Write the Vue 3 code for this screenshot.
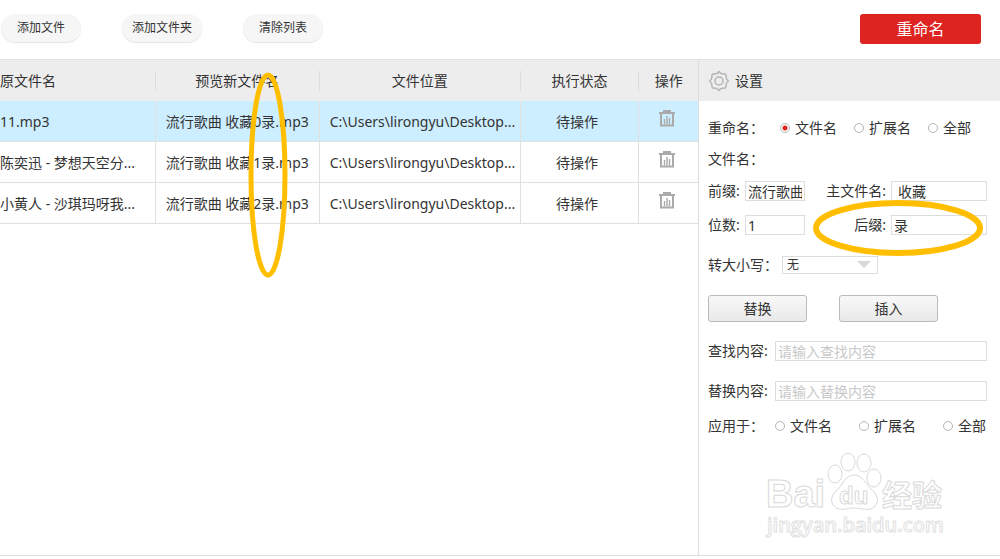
<template>
	<div class="app">
		<header class="toolbar">
			<div class="actions">
				<button v-for="action in actions" :key="action" class="pill" type="button">
					{{ action }}
				</button>
			</div>

			<button class="rename" type="button">重命名</button>
		</header>

		<main class="content">
			<section class="files">
				<table>
					<colgroup>
						<col class="col-source" />
						<col class="col-preview" />
						<col class="col-path" />
						<col class="col-status" />
						<col class="col-action" />
					</colgroup>

					<thead>
						<tr>
							<th v-for="column in columns" :key="column" scope="col">
								<span>{{ column }}</span>
							</th>
						</tr>
					</thead>

					<tbody>
						<tr
							v-for="(file, index) in files"
							:key="file.source"
							:class="{ selected: index === selected }"
							@click="selected = index"
						>
							<td class="source">{{ file.source }}</td>
							<td>{{ getPreview(index) }}</td>
							<td class="path">{{ file.path }}</td>
							<td class="status">待操作</td>
							<td class="action">
								<button class="remove" type="button" aria-label="删除">
									<svg width="16" height="17" viewBox="0 0 16 17" fill="none">
										<path d="M4 1H12M0 3H16M2 3V15.5H14V3" stroke="currentColor" stroke-width="2" />
										<path d="M5.5 9V14.5M8 6V14.5M10.5 8V14.5" stroke="currentColor" stroke-width="1.4" />
									</svg>
								</button>
							</td>
						</tr>
					</tbody>
				</table>

				<svg class="mark mark-preview" width="42" height="208" viewBox="0 0 42 208" fill="none">
					<ellipse cx="21" cy="104" rx="17" ry="100" stroke="#ffbf00" stroke-width="5" />
				</svg>
			</section>

			<aside class="settings">
				<h2>
					<svg width="22" height="22" viewBox="0 0 22 22" fill="none" stroke="#b5b5b5">
						<path
							d="M11 1.5Q12.6 3.7 14 3.8Q16.6 3.6 17.7 4.3Q18.4 5.4 18.2 8Q18.3 9.4 20.5 11Q18.3 12.6 18.2 14Q18.4 16.6 17.7 17.7Q16.6 18.4 14 18.2Q12.6 18.3 11 20.5Q9.4 18.3 8 18.2Q5.4 18.4 4.3 17.7Q3.6 16.6 3.8 14Q3.7 12.6 1.5 11Q3.7 9.4 3.8 8Q3.6 5.4 4.3 4.3Q5.4 3.6 8 3.8Q9.4 3.7 11 1.5Z"
							stroke-width="1.5"
							stroke-linejoin="round"
						/>
						<circle cx="11" cy="11" r="4" stroke-width="1.5" />
					</svg>
					设置
				</h2>

				<form class="form" @submit.prevent>
					<div class="row row-target" role="radiogroup" aria-label="重命名">
						<span class="caption">重命名：</span>
						<label v-for="target in targets" :key="target" class="radio">
							<input v-model="renameTarget" type="radio" name="rename" :value="target" />
							{{ target }}
						</label>
					</div>

					<div class="row row-heading">文件名：</div>

					<div class="fields">
						<label for="prefix">前缀:</label>
						<input id="prefix" v-model="prefix" type="text" />
						<label for="main" class="end">主文件名:</label>
						<input id="main" v-model="mainName" class="indented" type="text" />

						<label for="digits">位数:</label>
						<input id="digits" v-model="digits" type="text" />
						<label for="suffix" class="end">后缀:</label>
						<input id="suffix" v-model="suffix" type="text" />

						<svg class="mark mark-suffix" width="172" height="58" viewBox="0 0 172 58" fill="none">
							<ellipse cx="86" cy="29" rx="82" ry="25" stroke="#ffbf00" stroke-width="6" />
						</svg>
					</div>

					<div class="row row-case">
						<label for="letter-case">转大小写：</label>
						<div class="select">
							<select id="letter-case">
								<option>无</option>
							</select>
						</div>
					</div>

					<div class="modes">
						<button type="button">替换</button>
						<button type="button">插入</button>
					</div>

					<div class="row row-text">
						<label for="find">查找内容:</label>
						<input id="find" type="text" placeholder="请输入查找内容" />
					</div>

					<div class="row row-text">
						<label for="replace">替换内容:</label>
						<input id="replace" type="text" placeholder="请输入替换内容" />
					</div>

					<div class="row row-apply" role="radiogroup" aria-label="应用于">
						<span class="caption">应用于：</span>
						<label v-for="target in targets" :key="target" class="radio">
							<input v-model="applyTarget" type="radio" name="apply" :value="target" />
							{{ target }}
						</label>
					</div>
				</form>

				<svg class="watermark" width="190" height="96" viewBox="0 0 190 96">
					<g class="outline">
						<text x="6" y="62" font-size="38">Bai</text>
						<ellipse cx="75" cy="29" rx="7" ry="9" />
						<ellipse cx="88" cy="17" rx="7" ry="9" />
						<ellipse cx="104" cy="18" rx="7" ry="9" />
						<ellipse cx="114" cy="33" rx="7" ry="9" />
						<path
							d="M94 30C85 30 83 40 77 45C71 50 70 57 74 61C79 67 87 63 94 63C101 63 110 67 115 61C119 57 118 50 112 45C106 40 103 30 94 30Z"
						/>
						<text x="79" y="59" font-size="24">du</text>
						<text x="122" y="61" font-size="30">经验</text>
						<text x="7" y="87" class="url" font-size="20">jingyan.baidu.com</text>
					</g>
				</svg>
			</aside>
		</main>
	</div>
</template>

<script setup>
import { ref } from 'vue'

const actions = ['添加文件', '添加文件夹', '清除列表']
const columns = ['原文件名', '预览新文件名', '文件位置', '执行状态', '操作']
const targets = ['文件名', '扩展名', '全部']

const files = [
	{ source: '11.mp3', path: 'C:\\Users\\lirongyu\\Desktop...' },
	{ source: '陈奕迅 - 梦想天空分...', path: 'C:\\Users\\lirongyu\\Desktop...' },
	{ source: '小黄人 - 沙琪玛呀我...', path: 'C:\\Users\\lirongyu\\Desktop...' }
]

const selected = ref(0)
const renameTarget = ref('文件名')
const applyTarget = ref('')
const prefix = ref('流行歌曲')
const mainName = ref('收藏')
const digits = ref('1')
const suffix = ref('录')

/**
 * Build the new file name from the settings
 * @param {number} index Position of the file in the list
 * @returns {string} New file name
 */
const getPreview = (index) => {
	return `${prefix.value} ${mainName.value}${index}${suffix.value}.mp3`
}
</script>

<style>
body {
	margin: 0;
	background: #fff;
}
</style>

<style scoped>
.app {
	min-height: 100vh;
	box-sizing: border-box;
	padding-bottom: 3px;
	display: flex;
	flex-direction: column;
	overflow: hidden;
	color: #333;
	font-family: 'Noto Sans', 'Noto Sans CJK SC', sans-serif;
	font-size: 14px;
	line-height: 20px;
}

button,
input,
select {
	box-sizing: border-box;
	margin: 0;
	color: inherit;
	font: inherit;
}

.toolbar {
	display: flex;
	justify-content: space-between;
	align-items: flex-start;
	padding: 14px 19px 15px 1px;
	border-bottom: 1px solid #e0e0e0;
}

.actions {
	display: flex;
	gap: 41px;
}

.pill {
	width: 80px;
	height: 28px;
	padding: 0;
	border: 0;
	border-radius: 14px;
	background: #f6f6f6;
	box-shadow: 0 1px 1px #e4e4e4;
	font-size: 12px;
}

.rename {
	width: 121px;
	height: 30px;
	padding: 0;
	border: 0;
	border-radius: 3px;
	background: #de2420;
	color: #fff;
	font-size: 16px;
}

.content {
	flex: 1;
	display: flex;
	border-bottom: 1px solid #ddd;
}

.files {
	flex: 1;
	min-width: 0;
	position: relative;
}

table {
	width: 100%;
	table-layout: fixed;
	border-collapse: separate;
	border-spacing: 0;
	white-space: nowrap;
}

.col-source {
	width: 22.3%;
}

.col-preview {
	width: 23.5%;
}

.col-path {
	width: 28.8%;
}

.col-status {
	width: 17%;
}

.col-action {
	width: 8.4%;
}

th {
	padding: 11px 0 10px;
	background: #ededed;
	font-weight: 400;

	span {
		display: block;
		border-right: 1px solid #dcdcdc;
	}

	&:first-child {
		text-align: left;
	}

	&:last-child span {
		border: 0;
	}
}

td {
	height: 38px;
	padding: 2px 0 0 10px;
	border-right: 1px solid #e0e0e0;
	border-bottom: 1px solid #e0e0e0;

	&.source {
		padding-left: 0;
	}

	&.status {
		padding: 2px 5px 0 0;
		text-align: center;
	}

	&.action {
		padding: 0 3px 0 0;
		height: 40px;
		border-right: 0;
		text-align: center;
	}
}

.selected td {
	background: #cdeeff;
}

.remove {
	padding: 0;
	border: 0;
	background: none;
	color: #aaa;

	svg {
		display: block;
	}
}

.mark {
	position: absolute;
	pointer-events: none;
}

.mark-preview {
	top: 11px;
	left: 247px;
}

.settings {
	width: 301px;
	position: relative;
	border-left: 1px solid #ddd;

	h2 {
		display: flex;
		align-items: center;
		gap: 5px;
		height: 41px;
		margin: 0;
		padding-left: 9px;
		background: #ededed;
		font-size: 14px;
		font-weight: 400;
	}
}

.form {
	padding: 17px 13px 0 9px;

	input[type='text'] {
		min-width: 0;
		height: 20px;
		padding: 0 2px;
		border: 1px solid #ddd;
		background: #fff;
		line-height: 18px;

		&.indented {
			padding-left: 6px;
		}

		&::placeholder {
			color: #c8c8c8;
			opacity: 1;
		}
	}
}

.row {
	display: flex;
	align-items: center;
	height: 20px;
}

.caption {
	flex-shrink: 0;
	white-space: nowrap;
}

.radio {
	display: flex;
	align-items: center;
	gap: 5px;
	white-space: nowrap;

	input {
		appearance: none;
		width: 10px;
		height: 10px;
		border: 1px solid #b5b5b5;
		border-radius: 50%;
		background: #fff;
	}

	input:checked {
		background: radial-gradient(circle, #de2420 2px, #fff 3px);
	}
}

.row-target {
	gap: 17px;

	.caption {
		width: 55px;
	}
}

.row-heading {
	margin-top: 11px;
}

.fields {
	position: relative;
	display: grid;
	grid-template-columns: 37px 60px 1fr 96px;
	row-gap: 14px;
	margin-top: 12px;
}

.end {
	padding-right: 5px;
	text-align: right;
}

.mark-suffix {
	top: 18px;
	right: 3px;
}

.row-case {
	margin-top: 20px;
}

.select {
	position: relative;
	margin-left: 4px;

	select {
		display: block;
		appearance: none;
		width: 96px;
		height: 18px;
		padding: 0 4px;
		border: 1px solid #ddd;
		border-radius: 0;
		background: #fff;
		font-size: 12px;
		line-height: 16px;
	}

	&::after {
		content: '';
		position: absolute;
		top: 5px;
		right: 7px;
		border: 7px solid transparent;
		border-top-color: #d8d8d8;
		border-bottom: 0;
		pointer-events: none;
	}
}

.modes {
	display: flex;
	gap: 32px;
	margin: 20px 0 19px;

	button {
		width: 99px;
		height: 27px;
		padding: 0;
		border: 1px solid #bbb;
		border-radius: 3px;
		background: linear-gradient(#f8f8f8, #e9e9e9);
	}
}

.row-text {
	margin-bottom: 20px;

	label {
		width: 67px;
	}

	input {
		flex: 1;
	}
}

.row-apply {
	gap: 27px;
	margin-top: -5px;

	.caption {
		width: 40px;
	}
}

.watermark {
	position: absolute;
	right: 50px;
	bottom: 14px;
	pointer-events: none;
}

.outline {
	fill: #fff;
	stroke: #d9d9d9;
	stroke-width: 1px;
	stroke-linejoin: round;
	font-family: 'Liberation Sans', 'Noto Sans CJK SC', sans-serif;
	font-weight: 700;
}

.url {
	stroke: #e0e0e0;
	font-family: 'Open Sans', sans-serif;
	font-weight: 600;
}
</style>
